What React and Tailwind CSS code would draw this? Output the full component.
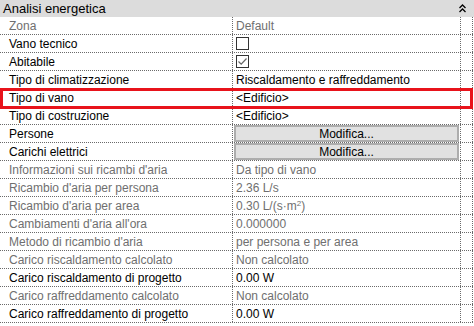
import React from "react";

const rows = [
  { label: "Zona", value: "Default", dim: true },
  { label: "Vano tecnico", check: false },
  { label: "Abitabile", check: true },
  { label: "Tipo di climatizzazione", value: "Riscaldamento e raffreddamento" },
  { label: "Tipo di vano", value: "<Edificio>" },
  { label: "Tipo di costruzione", value: "<Edificio>" },
  { label: "Persone", button: true },
  { label: "Carichi elettrici", button: true },
  { label: "Informazioni sui ricambi d'aria", value: "Da tipo di vano", dim: true },
  { label: "Ricambio d'aria per persona", value: "2.36 L/s", dim: true },
  { label: "Ricambio d'aria per area", value: "0.30 L/(s·m²)", dim: true, sup: true },
  { label: "Cambiamenti d'aria all'ora", value: "0.000000", dim: true },
  { label: "Metodo di ricambio d'aria", value: "per persona e per area", dim: true },
  { label: "Carico riscaldamento calcolato", value: "Non calcolato", dim: true },
  { label: "Carico riscaldamento di progetto", value: "0.00 W" },
  { label: "Carico raffreddamento calcolato", value: "Non calcolato", dim: true },
  { label: "Carico raffreddamento di progetto", value: "0.00 W" },
];

function Checkbox({ checked }) {
  return (
    <div className="w-[13px] h-[13px] border border-[#333] bg-white flex items-center justify-center">
      {checked && (
        <svg width="11" height="11" viewBox="0 0 11 11">
          <path d="M1.5 5.5 L4.2 8.2 L9.5 2.5" fill="none" stroke="#666" strokeWidth="1.2" />
        </svg>
      )}
    </div>
  );
}

function ValueCell({ row }) {
  if (row.check !== undefined) return <Checkbox checked={row.check} />;
  if (row.button)
    return (
      <div className="w-full h-[17px] bg-[#e1e1e1] border-2 border-[#adadad] flex items-center justify-center text-black">
        Modifica...
      </div>
    );
  if (row.sup)
    return (
      <span className="text-[#6f6f6f]">
        0.30 L/(s·m<sup className="text-[8px]">2</sup>)
      </span>
    );
  return <span className={row.dim ? "text-[#6f6f6f]" : "text-black"}>{row.value}</span>;
}

export default function App() {
  return (
    <div
      className="relative w-[474px] h-[326px] bg-white text-[12px] leading-none overflow-hidden"
      style={{ fontFamily: '"Liberation Sans", Arial, sans-serif' }}
    >
      <div className="h-[17px] bg-[#dcdcdc] flex items-center justify-between pl-[3px] pr-[8px]">
        <span className="text-black text-[13px]">Analisi energetica</span>
        <svg width="7" height="9" viewBox="0 0 7 9">
          <path d="M0.5 4 L3.5 1 L6.5 4 M0.5 8 L3.5 5 L6.5 8" fill="none" stroke="#000" strokeWidth="1.3" />
        </svg>
      </div>
      <div className="w-[473px]">
        {rows.map((row, i) => (
          <div key={i} className="flex h-[18px] border-b border-dotted border-[#6a6a6a]">
            <div
              className={`w-[233px] border-r border-dotted border-[#6a6a6a] flex items-center pl-[9px] ${
                row.dim ? "text-[#6f6f6f]" : "text-black"
              }`}
            >
              {row.label}
            </div>
            <div
              className={`w-[228px] border-r border-dotted border-[#6a6a6a] flex items-center ${
                row.button ? "px-[1px]" : "pl-[3px]"
              }`}
            >
              <ValueCell row={row} />
            </div>
            <div className="w-[12px] border-r border-dotted border-[#6a6a6a]" />
          </div>
        ))}
      </div>
      <div className="absolute left-0 top-[88px] w-[473px] h-[21px] border-[3px] border-[#e8131b]" />
    </div>
  );
}
